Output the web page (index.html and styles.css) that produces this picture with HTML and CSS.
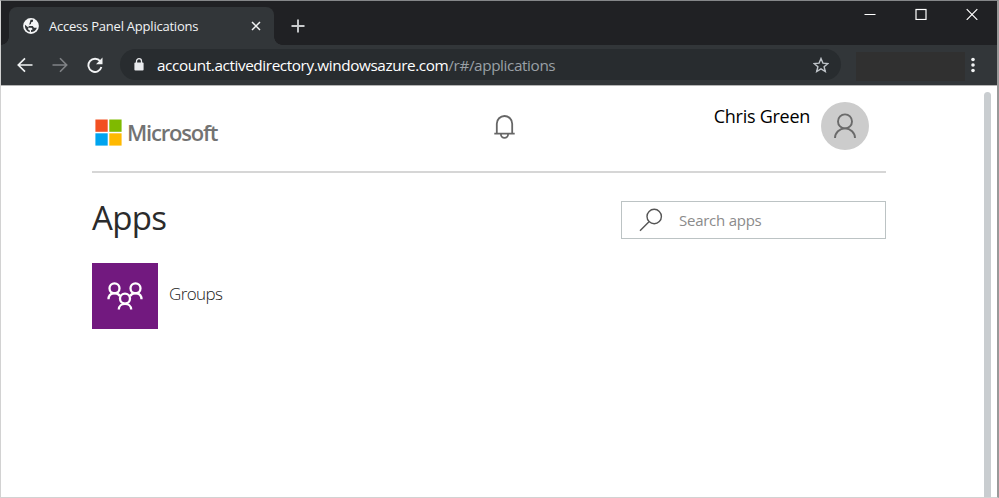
FILE: index.html
```html
<!DOCTYPE html>
<html lang="en">
<head>
<meta charset="utf-8">
<title>Access Panel Applications</title>
<link rel="stylesheet" href="styles.css">
</head>
<body>
<div class="window">
  <div class="tabstrip">
    <div class="tab">
      <svg class="globe" viewBox="0 0 16 16" width="16" height="16"><circle cx="8" cy="8" r="7.900" fill="#f4f5f6"/><path d="M7.600 1.800H10V3.600L8 4.600V6L6 6.700V7.900H9.700L11 9.700H13.900C13 12.300 10.800 14.100 8 14.100V12.300L9.700 11.200 8.600 9.800H5.600L2 6.800C1.500 10.500 3.800 13.500 6.800 14V12.500L5.200 11.400V10Z" fill="#323639"/></svg>
      <span class="tab-title">Access Panel Applications</span>
      <svg class="tab-close" viewBox="0 0 10 10" width="10" height="10"><path d="M1 1l8 8M9 1l-8 8" stroke="#f1f3f4" stroke-width="1.500"/></svg>
    </div>
    <svg class="new-tab" viewBox="0 0 14 14" width="14" height="14"><path d="M7 .5v13M.5 7h13" stroke="#c9cbcd" stroke-width="1.900"/></svg>
    <div class="controls">
      <svg viewBox="0 0 12 12" width="12" height="12"><path d="M.5 6.500h11" stroke="#fff"/></svg>
      <svg viewBox="0 0 12 12" width="12" height="12"><rect x="1" y="1.500" width="10" height="10" fill="none" stroke="#fff" stroke-width="1.200"/></svg>
      <svg viewBox="0 0 12 12" width="12" height="12"><path d="M.7 1.200l10.600 10.600M11.300 1.200L.7 11.800" stroke="#fff" stroke-width="1.200"/></svg>
    </div>
  </div>
  <div class="toolbar">
    <svg class="nav" viewBox="0 0 16 16" width="16" height="16"><path d="M15.500 8H1.500M8 1.300L1.300 8 8 14.700" fill="none" stroke="#f1f3f4" stroke-width="1.700"/></svg>
    <svg class="nav" viewBox="0 0 16 16" width="16" height="16"><path d="M.5 8h14M8 1.300L14.700 8 8 14.700" fill="none" stroke="#808386" stroke-width="1.600"/></svg>
    <svg class="nav" viewBox="0 0 16 16" width="16" height="16"><path d="M13.200 4.200A6.600 6.600 0 1 0 14.400 10" fill="none" stroke="#f1f3f4" stroke-width="1.900"/><path d="M15.500.6v6.600H9Z" fill="#f1f3f4"/></svg>
    <div class="omnibox">
      <svg class="lock" viewBox="0 0 10 13" width="10" height="13"><rect x=".4" y="4.500" width="9.200" height="8" rx="1" fill="#e8eaed"/><path d="M2.500 5V3.200a2.500 2.500 0 0 1 5 0V5" fill="none" stroke="#e8eaed" stroke-width="1.300"/></svg>
      <span class="url">account.activedirectory.windowsazure.com<span class="path">/r#/applications</span></span>
      <svg class="star" viewBox="0 0 16 16" width="16" height="16"><path d="M8 1.500l1.900 4.600 5 .4-3.800 3.200 1.200 4.800L8 11.900l-4.300 2.600 1.200-4.800L1.100 6.500l5-.4Z" fill="none" stroke="#bfc4c9" stroke-width="1.400"/></svg>
    </div>
    <div class="extension"></div>
    <svg class="kebab" viewBox="0 0 4 16" width="4" height="16"><g fill="#f1f3f4"><circle cx="2" cy="2.500" r="1.800"/><circle cx="2" cy="8" r="1.800"/><circle cx="2" cy="13.500" r="1.800"/></g></svg>
  </div>
  <div class="viewport">
    <main class="page">
      <header class="header">
        <div class="brand">
          <svg viewBox="0 0 27 27" width="27" height="27"><path fill="#f25022" d="M.4.500h12.300v12.300H.4z"/><path fill="#7fba00" d="M14.300.500h12.300v12.300H14.300z"/><path fill="#00a4ef" d="M.4 14.300h12.300v12.300H.4z"/><path fill="#ffb900" d="M14.300 14.300h12.300v12.300H14.300z"/></svg>
          <span class="brand-name">Microsoft</span>
        </div>
        <svg class="bell" viewBox="0 0 22 25" width="22" height="25"><path d="M3.800 19.700V9.700a7.700 7.700 0 0 1 15.400 0v10M1.300 19.700h20.400M7.900 20.200a3.600 3.600 0 0 0 7.200 0" fill="none" stroke="#666" stroke-width="1.800"/></svg>
        <div class="account">
          <span class="user">Chris Green</span>
          <div class="avatar"><svg viewBox="0 0 22 26" width="22" height="26"><g fill="none" stroke="#6a6a6a" stroke-width="1.900"><circle cx="11" cy="8.400" r="7"/><path d="M1 25a10 9.600 0 0 1 20 0"/></g></svg></div>
        </div>
      </header>
      <section class="title-row">
        <h1>Apps</h1>
        <div class="search">
          <svg viewBox="0 0 24 24" width="24" height="24"><g fill="none" stroke="#555" stroke-width="1.400"><circle cx="15.200" cy="8.500" r="7.200"/><path d="M10 13.700L1 22.800"/></g></svg>
          <span>Search apps</span>
        </div>
      </section>
      <div class="app">
        <div class="tile"><svg viewBox="0 0 36 28" width="36" height="28"><g fill="none" stroke="#fff" stroke-width="2.300"><circle cx="7.500" cy="6.300" r="5"/><circle cx="28.500" cy="6.300" r="5"/><circle cx="18" cy="16.600" r="5"/><path d="M1.500 17.300c0-7.500 9-7.500 11.500-3M34.500 17.300c0-7.500-9-7.500-11.500-3M11.800 27.500c0-7.500 12.400-7.500 12.400 0"/></g></svg></div>
        <span class="app-name">Groups</span>
      </div>
    </main>
    <div class="scrollbar"></div>
  </div>
</div>
</body>
</html>
```
FILE: styles.css
```css
* { box-sizing: border-box; }
body { margin: 0; font-family: "Open Sans", "Noto Sans", sans-serif; }
svg { display: block; flex: none; }
span { white-space: nowrap; }
.window {
  width: 999px; height: 498px; overflow: hidden;
  display: flex; flex-direction: column;
  background: #fff;
  border: 1px solid #d2d2d2; border-top-color: #858789;
  border-right: 2px solid #999;
}
.tabstrip { height: 44px; flex: none; display: flex; background: #202124; padding-left: 8px; }
.tab {
  width: 265px; height: 38px; margin-top: 6px; position: relative;
  display: flex; align-items: center;
  background: #323639; border-radius: 8px 8px 0 0;
  padding-left: 14px;
}
.tab::before, .tab::after { content: ""; position: absolute; bottom: 0; width: 8px; height: 8px; }
.tab::before { left: -8px; background: radial-gradient(circle at 0 0, #202124 7.5px, #323639 8px); }
.tab::after { right: -8px; background: radial-gradient(circle at 100% 0, #202124 7.5px, #323639 8px); }
.tab-title { margin-left: 10px; width: 202px; font-size: 13px; color: #f1f3f4; letter-spacing: -0.22px; }
.new-tab { margin: 18px 0 0 17px; }
.controls { margin-left: auto; display: flex; gap: 39px; padding: 7px 19px 0 0; }
.toolbar { height: 40px; flex: none; display: flex; align-items: center; background: #323639; padding: 0 0 1px 16px; }
.nav { margin-right: 19px; }
.omnibox {
  width: 721px; height: 31px; border-radius: 16px; background: #282c2f;
  display: flex; align-items: center; padding: 0 12px 0 14px; margin-left: -2px;
}
.url { margin-left: 13px; font-size: 15.3px; color: #fff; letter-spacing: -0.4px; }
.path { color: #9aa0a6; }
.star { margin-left: auto; }
.extension { width: 109px; height: 29px; margin: 3px 6px 0 15px; background: #303030; }
.viewport { flex: 1; display: flex; border-top: 1px solid #b5b5b5; }
.page { width: 794px; margin-left: 91px; }
.header { height: 87px; display: flex; border-bottom: 2px solid #d6d6d6; }
.brand { width: 401px; display: flex; align-items: center; padding: 8px 0 0 3px; }
.brand-name { margin-left: 5px; font-size: 22px; line-height: 27px; font-weight: 600; color: #737373; letter-spacing: -1.2px; }
.bell { margin-top: 28px; }
.account { margin-left: auto; display: flex; padding: 16px 17px 0 0; }
.user { font-size: 18px; line-height: 28px; color: #000; margin-right: 11px; letter-spacing: -0.27px; }
.avatar { width: 48px; height: 48px; border-radius: 50%; background: #ccc; display: grid; place-items: center; }
.title-row { height: 90px; display: flex; justify-content: space-between; padding-top: 28px; }
h1 { margin: -1px 0 0; font-size: 33px; font-weight: 400; line-height: 36px; color: #2b2b2b; letter-spacing: -0.7px; }
.search { width: 265px; height: 38px; border: 1px solid #bcc3c4; display: flex; align-items: center; padding-left: 17px; color: #8b8b8b; font-size: 15px; letter-spacing: -0.25px; gap: 16px; }
.app { display: flex; align-items: center; gap: 11px; }
.tile { width: 66px; height: 66px; background: #72197f; display: grid; place-items: center; }
.app-name { font-size: 17px; font-weight: 300; color: #222; letter-spacing: -0.6px; padding-bottom: 5px; }
.scrollbar { width: 7px; margin: 6px 0 0 98px; border-radius: 4px 4px 0 0; background: #c9cdd0; }
```
